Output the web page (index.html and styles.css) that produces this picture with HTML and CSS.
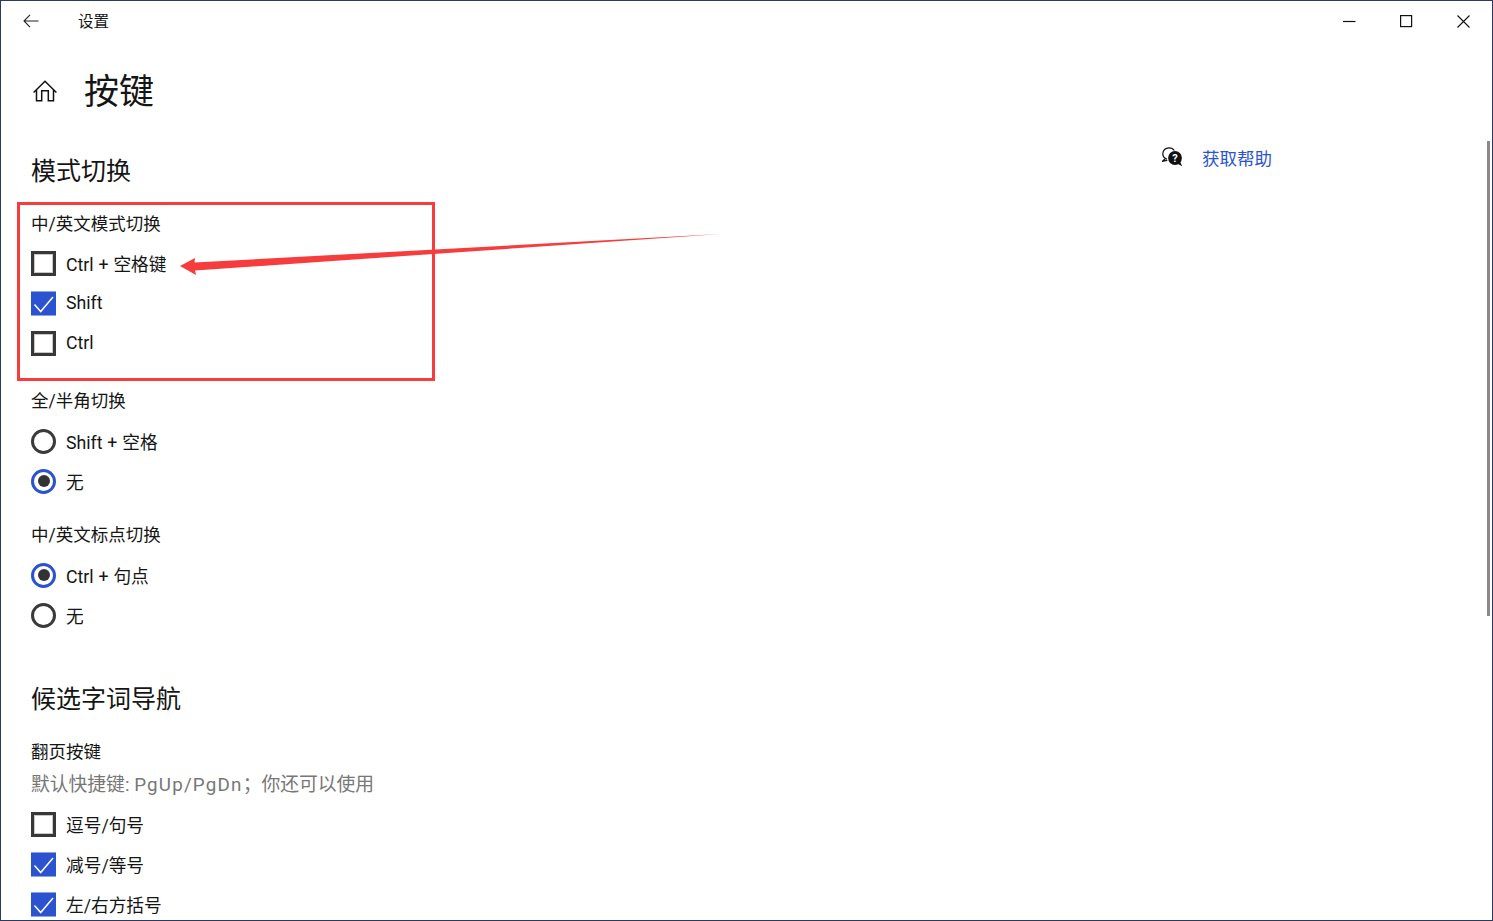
FILE: index.html
```html
<!DOCTYPE html>
<html lang="zh-CN">
<head>
    <meta charset="UTF-8">
    <title>设置</title>
    <link rel="stylesheet" href="styles.css">
</head>
<body>

<div class="window">
    <div class="titlebar">
        <div class="title-left">
            <svg class="back-icon" width="16" height="14" viewBox="0 0 16 14"><path d="M15.500 7H1M7 .8 1 7l6 6.200" fill="none" stroke="#222" stroke-width="1.100"/></svg>
            <span class="title-text">设置</span>
        </div>
        <div class="win-controls">
            <svg width="13" height="13" viewBox="0 0 13 13"><path d="M0 6.500h12.500" stroke="#111" stroke-width="1.200"/></svg>
            <svg width="13" height="13" viewBox="0 0 13 13"><rect x=".6" y=".6" width="11" height="11" fill="none" stroke="#111" stroke-width="1.200"/></svg>
            <svg width="13" height="13" viewBox="0 0 13 13"><path d="M.5.5l12 12M12.500.5l-12 12" stroke="#111" stroke-width="1.100"/></svg>
        </div>
    </div>

    <div class="page-head">
        <svg class="home-icon" width="24" height="22" viewBox="0 0 24 22"><path d="M.6 12.500 12 1.200l11.400 11.300M3.500 9.500v11.300h5.200v-10h6.600v10h5.200V9.500" fill="none" stroke="#111" stroke-width="1.500"/></svg>
        <h1>按键</h1>
    </div>

    <div class="content">
        <div class="settings">
            <h2>模式切换</h2>
            <div class="group-label">中/英文模式切换</div>
            <label class="option"><span class="box"></span>Ctrl + 空格键</label>
            <label class="option"><span class="box checked"><svg width="25" height="25" viewBox="0 0 25 25"><path d="M3.500 13.500l6.200 7L22 6" fill="none" stroke="#fff" stroke-width="1.500"/></svg></span>Shift</label>
            <label class="option"><span class="box"></span>Ctrl</label>

            <div class="group-label group-gap">全/半角切换</div>
            <div class="radio-group">
                <label class="option"><span class="radio"></span>Shift + 空格</label>
                <label class="option"><span class="radio on"></span>无</label>
            </div>

            <div class="group-label group-gap-sm">中/英文标点切换</div>
            <div class="radio-group">
                <label class="option"><span class="radio on"></span>Ctrl + 句点</label>
                <label class="option"><span class="radio"></span>无</label>
            </div>

            <h2 class="section-gap">候选字词导航</h2>
            <div class="group-label">翻页按键</div>
            <div class="hint">默认快捷键: <span class="hint-keys">PgUp/PgDn</span>；你还可以使用</div>
            <label class="option"><span class="box"></span>逗号/句号</label>
            <label class="option"><span class="box checked"><svg width="25" height="25" viewBox="0 0 25 25"><path d="M3.500 13.500l6.200 7L22 6" fill="none" stroke="#fff" stroke-width="1.500"/></svg></span>减号/等号</label>
            <label class="option"><span class="box checked"><svg width="25" height="25" viewBox="0 0 25 25"><path d="M3.500 13.500l6.200 7L22 6" fill="none" stroke="#fff" stroke-width="1.500"/></svg></span>左/右方括号</label>
        </div>

        <a class="help-link" href="#">
            <svg width="21" height="20" viewBox="0 0 21 20">
                <path d="M5 12.200C2.400 11.300.8 9.300.8 6.800.8 3.400 3.400.8 7 .8c2.400 0 4.300 1 5.300 2.700M3.500 11.500 .3 14.300l5-1" fill="#fff" stroke="#111" stroke-width="1.200"/>
                <circle cx="13" cy="11" r="6.900" fill="#111"/>
                <path d="M15 16.500l5.300 2.800-2.500-5z" fill="#111"/>
                <text class="help-mark" x="13" y="15" text-anchor="middle">?</text>
            </svg>
            <span>获取帮助</span>
        </a>
    </div>

    <div class="scroll-thumb"></div>
    <div class="red-box"></div>
    <svg class="red-arrow" width="560" height="50" viewBox="0 0 560 50">
        <path d="M1 33 16 25l-.5 4.500L542 1 16 37.500 17 42z" fill="#f63c3c"/>
    </svg>
</div>

</body>
</html>
```

FILE: styles.css
```css
* {
    box-sizing: border-box;
}
html, body {
    margin: 0;
    height: 100%;
    overflow: hidden;
    background: #fff;
}
body {
    font-family: Roboto, "Noto Sans CJK SC", sans-serif;
    font-size: 17.5px;
    color: #151515;
}
.window {
    position: relative;
    width: 1493px;
    height: 921px;
    border: 1px solid #2b3a63;
    overflow: hidden;
}
.titlebar {
    display: flex;
    justify-content: space-between;
    align-items: center;
    height: 40px;
}
.title-left {
    display: flex;
    align-items: center;
    padding-left: 22px;
}
.back-icon {
    margin-right: 39px;
}
.title-text {
    font-size: 15.500px;
    margin-bottom: 2px;
}
.win-controls {
    display: flex;
    gap: 44px;
    padding-right: 22px;
}
.page-head {
    display: flex;
    align-items: center;
    height: 60px;
    margin-top: 20px;
    padding-left: 32px;
}
.page-head h1 {
    margin: 4px 0 0 27px;
    font-size: 35px;
    font-weight: 400;
    line-height: 56px;
}
.content {
    display: flex;
    padding: 20px 0 0 30px;
}
.settings {
    width: 1130px;
}
h2 {
    margin: 9px 0 13px;
    font-size: 25px;
    font-weight: 400;
    height: 40px;
    line-height: 44px;
}
h2.section-gap {
    margin-top: 43px;
}
.group-label {
    height: 40px;
    line-height: 42px;
}
.group-gap {
    margin-top: 17px;
}
.group-gap-sm {
    margin-top: 13px;
}
.radio-group {
    margin-top: 1px;
}
.hint {
    height: 26px;
    line-height: 28px;
    margin-bottom: 7px;
    font-size: 18.800px;
    color: #777;
}
.hint-keys {
    letter-spacing: 1.200px;
}
.option {
    display: flex;
    align-items: center;
    height: 40px;
    font-size: 17.700px;
    word-spacing: .5px;
}
.box {
    flex: none;
    width: 25px;
    height: 25px;
    margin-right: 10px;
    border: 3px solid #383838;
    background: #fff;
    box-shadow: inset 0 0 0 1px #c8c8c8;
}
.box.checked {
    border: none;
    background: #2b52cf;
    box-shadow: inset 0 1px #8fa3e6, inset 0 -1px #8fa3e6;
}
.box svg {
    display: block;
}
.radio {
    flex: none;
    width: 25px;
    height: 25px;
    margin-right: 10px;
    border: 3px solid #3a3a3a;
    border-radius: 50%;
    display: flex;
    align-items: center;
    justify-content: center;
}
.radio.on {
    border-color: #2b52cf;
}
.radio.on::after {
    content: "";
    width: 12px;
    height: 12px;
    border-radius: 50%;
    background: #333;
}
.help-link {
    display: flex;
    align-items: center;
    gap: 19px;
    height: 30px;
    margin: 1px 0 0 1px;
    color: #2b55cc;
    text-decoration: none;
}
.help-mark {
    font-size: 11px;
    font-weight: 700;
    fill: #fff;
}
.scroll-thumb {
    position: absolute;
    left: 1486px;
    top: 140px;
    width: 3px;
    height: 475px;
    background: #8a8a8a;
}
.red-box {
    position: absolute;
    left: 16px;
    top: 201px;
    width: 418px;
    height: 179px;
    border: 3px solid #f63c3c;
}
.red-arrow {
    position: absolute;
    left: 178px;
    top: 232px;
}
```
